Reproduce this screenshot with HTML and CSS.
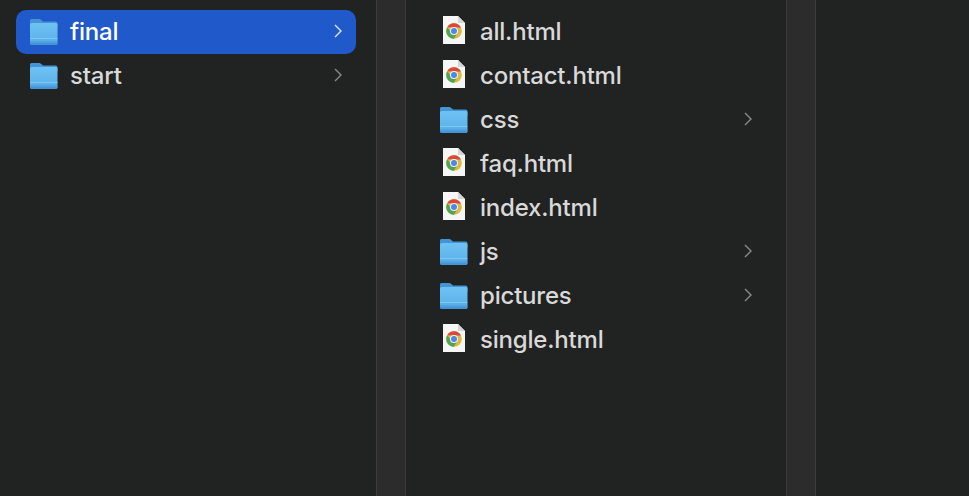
FILE: index.html
```html
<!DOCTYPE html>
<html lang="en">
<head>
<meta charset="utf-8">
<title>Finder</title>
<link rel="stylesheet" href="styles.css">
</head>
<body>
<svg class="defs" width="0" height="0" aria-hidden="true">
  <defs>
    <linearGradient id="fg" x1="0" y1="0" x2="0" y2="1">
      <stop offset="0" stop-color="#6fc2f3"/>
      <stop offset="0.7" stop-color="#5fb4ec"/>
      <stop offset="1" stop-color="#52a5e2"/>
    </linearGradient>
    <symbol id="folder" viewBox="0 0 29 28">
      <path d="M1 2.500C1 1.500 1.800 1 3 1h7c1 0 1.600.4 2.300 1.100L14 3.500h12.500C27.800 3.500 28.500 4.300 28.500 5.500v4H1z" fill="#4494d6"/>
      <path d="M1 7c0-1.300.7-2 2-2h23.500c1.300 0 2 .7 2 2v18c0 1.300-.7 2-2 2H3c-1.300 0-2-.7-2-2z" fill="url(#fg)"/>
      <rect x="1" y="20" width="27.500" height="1" fill="#8ad0f6" opacity=".7"/>
      <rect x="1" y="23" width="27.500" height="1" fill="#4a9cdc" opacity=".5"/>
      <path d="M1 25c0 1.300.7 2 2 2h23.500c1.300 0 2-.7 2-2v-.5H1z" fill="#4594d6"/>
    </symbol>
    <symbol id="chrome" viewBox="0 0 22 28">
      <path d="M0 0h15l7 7v21H0z" fill="#f6f6f6"/>
      <path d="M15 0l7 7h-7z" fill="#d6d6d6"/>
      <circle cx="11" cy="15" r="7.800" fill="#e0b83a"/>
      <path d="M4.200 11.200A7.800 7.800 0 0 1 18 11.500L11 11.500z" fill="#d9483b"/>
      <path d="M4.200 11.200A7.800 7.800 0 0 0 11 22.800L14.500 16.500 8 16z" fill="#4fa45a"/>
      <circle cx="11" cy="15" r="4" fill="#f4f4f4"/>
      <circle cx="11" cy="15" r="3" fill="#4f86e8"/>
    </symbol>
    <symbol id="chev" viewBox="0 0 8 14">
      <path d="M1 1l6 6-6 6" fill="none" stroke="currentColor" stroke-width="1.400"/>
    </symbol>
  </defs>
</svg>
<div class="finder">
  <section class="pane pane-first">
    <div class="row row-selected"><svg class="ic-folder"><use href="#folder"/></svg><span class="name">final</span><svg class="chev"><use href="#chev"/></svg></div>
    <div class="row"><svg class="ic-folder"><use href="#folder"/></svg><span class="name">start</span><svg class="chev"><use href="#chev"/></svg></div>
  </section>
  <div class="strip"></div>
  <section class="pane pane-second">
    <div class="row"><svg class="ic-doc"><use href="#chrome"/></svg><span class="name">all.html</span></div>
    <div class="row"><svg class="ic-doc"><use href="#chrome"/></svg><span class="name">contact.html</span></div>
    <div class="row"><svg class="ic-folder"><use href="#folder"/></svg><span class="name">css</span><svg class="chev"><use href="#chev"/></svg></div>
    <div class="row"><svg class="ic-doc"><use href="#chrome"/></svg><span class="name">faq.html</span></div>
    <div class="row"><svg class="ic-doc"><use href="#chrome"/></svg><span class="name">index.html</span></div>
    <div class="row"><svg class="ic-folder"><use href="#folder"/></svg><span class="name">js</span><svg class="chev"><use href="#chev"/></svg></div>
    <div class="row"><svg class="ic-folder"><use href="#folder"/></svg><span class="name">pictures</span><svg class="chev"><use href="#chev"/></svg></div>
    <div class="row"><svg class="ic-doc"><use href="#chrome"/></svg><span class="name">single.html</span></div>
  </section>
  <div class="strip"></div>
  <section class="pane pane-last"></section>
</div>
</body>
</html>
```
FILE: styles.css
```css
html, body {
  margin: 0;
  height: 100%;
  background: #212222;
  overflow: hidden;
}
.defs { position: absolute; }
.finder {
  display: flex;
  width: 969px;
  height: 496px;
  font-family: Inter, "Liberation Sans", sans-serif;
  font-size: 24px;
  font-weight: 500;
  letter-spacing: -0.2px;
  color: #d9d9d9;
}
.pane { display: flex; flex-direction: column; background: #212222; box-sizing: border-box; padding-top: 10px; }
.pane-first { width: 376px; padding-left: 16px; padding-right: 20px; }
.pane-second { width: 380px; padding-left: 20px; padding-right: 20px; }
.pane-last { flex: 1; }
.strip {
  width: 28px;
  background: #2c2c2c;
  border-left: 1px solid #3c3c3c;
  border-right: 1px solid #3c3c3c;
}
.row {
  display: flex;
  align-items: center;
  height: 44px;
  padding: 0 13px 0 14px;
  border-radius: 10px;
  flex: none;
}
.row-selected { background: #2059c9; color: #fff; }
.ic-folder { width: 29px; height: 28px; flex: none; margin: -1px 12px 0 -1px; }
.ic-doc { width: 22px; height: 28px; flex: none; margin: -4px 15px 0 3px; }
.name { flex: 1; margin-top: -2px; }
.chev { width: 8px; height: 14px; color: #8a8a8a; flex: none; margin: -2px 1px 0 -1px; }
.row-selected .chev { color: #dfe6f6; }
```
